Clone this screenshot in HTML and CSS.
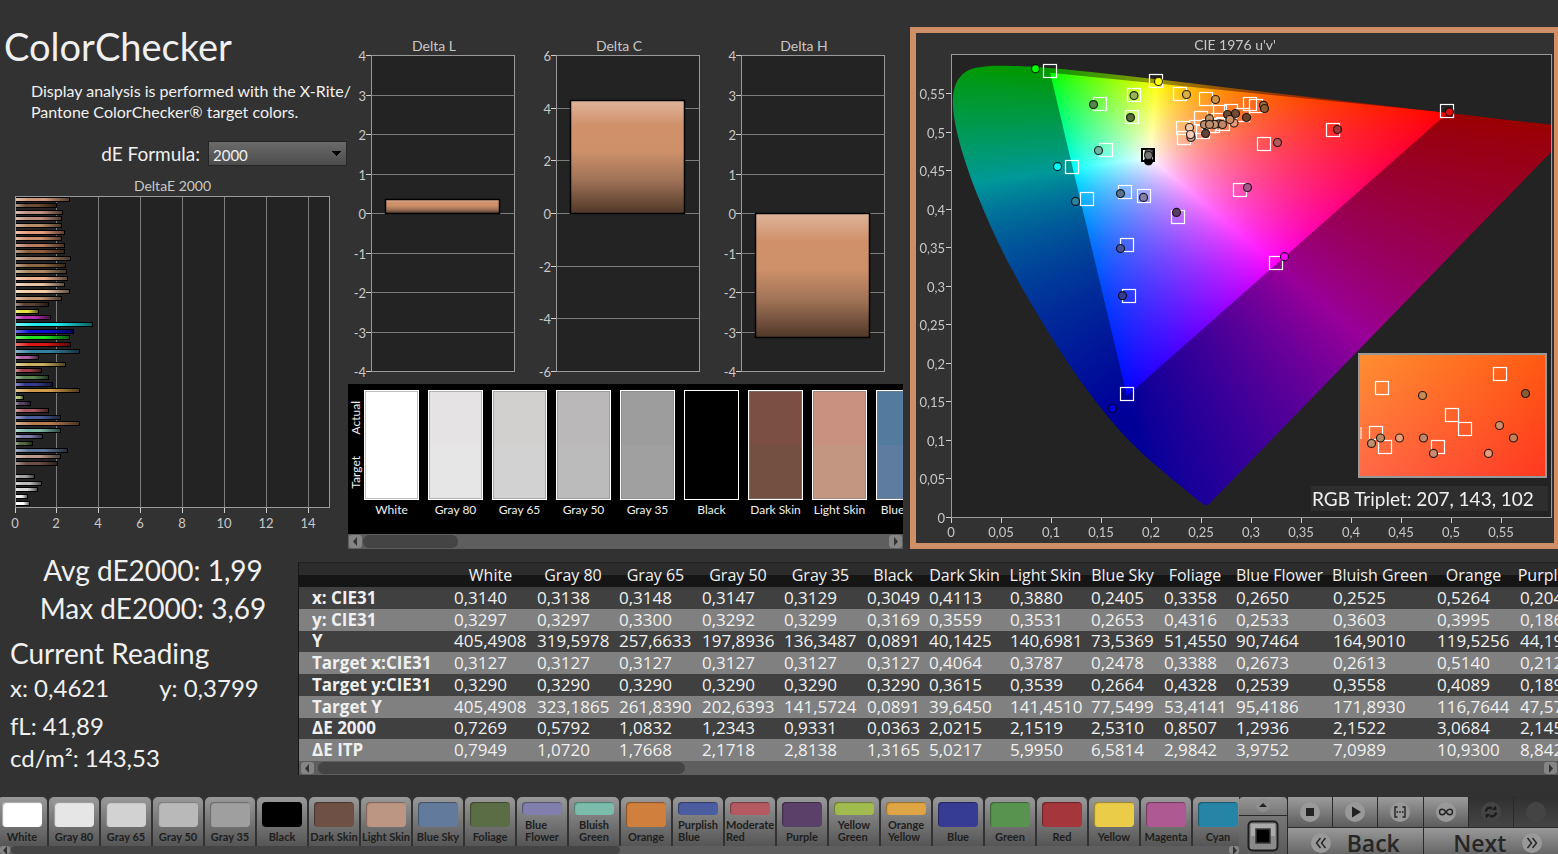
FILE: index.html
```html
<!DOCTYPE html>
<html lang="en">
<head>
<meta charset="utf-8">
<title>ColorChecker</title>
<link rel="stylesheet" href="styles.css">
</head>
<body>
<main class="app">
  <section class="top">
    <div class="intro">
      <h1 class="title">ColorChecker</h1>
      <p class="desc">Display analysis is performed with the X-Rite/<br>Pantone ColorChecker® target colors.</p>
      <div class="formula">
        <label for="formula">dE Formula:</label>
        <select id="formula" class="select"><option>2000</option></select>
      </div>
      <svg id="de-chart" class="chart" viewBox="0 176 348 360" role="img" aria-label="DeltaE 2000"></svg>
    </div>

    <div class="middle">
      <div class="deltas">
        <svg id="delta-l" class="chart" viewBox="0 0 185 348" role="img" aria-label="Delta L"></svg>
        <svg id="delta-c" class="chart" viewBox="0 0 185 348" role="img" aria-label="Delta C"></svg>
        <svg id="delta-h" class="chart" viewBox="0 0 185 348" role="img" aria-label="Delta H"></svg>
      </div>
      <div class="swatches">
        <div class="side"><span>Actual</span><span>Target</span></div>
        <div class="pairs">
          <figure class="pair"><div class="chip c-white"></div><figcaption>White</figcaption></figure>
          <figure class="pair"><div class="chip c-g80"></div><figcaption>Gray 80</figcaption></figure>
          <figure class="pair"><div class="chip c-g65"></div><figcaption>Gray 65</figcaption></figure>
          <figure class="pair"><div class="chip c-g50"></div><figcaption>Gray 50</figcaption></figure>
          <figure class="pair"><div class="chip c-g35"></div><figcaption>Gray 35</figcaption></figure>
          <figure class="pair"><div class="chip c-black"></div><figcaption>Black</figcaption></figure>
          <figure class="pair"><div class="chip c-dark"></div><figcaption>Dark Skin</figcaption></figure>
          <figure class="pair"><div class="chip c-light"></div><figcaption>Light Skin</figcaption></figure>
          <figure class="pair"><div class="chip c-sky"></div><figcaption>Blue Sky</figcaption></figure>
        </div>
      </div>
      <div class="scroll">
        <button class="arrow" aria-label="Scroll left"><svg viewBox="0 0 13 13"><path d="M8 2v9L4 6.500z"/></svg></button>
        <div class="track"><div class="thumb thumb-a"></div></div>
        <button class="arrow" aria-label="Scroll right"><svg viewBox="0 0 13 13"><path d="M5 2v9l4-4.500z"/></svg></button>
      </div>
    </div>

    <div class="gamut">
      <canvas id="gamut-fill" width="638" height="510"></canvas>
      <svg id="gamut-plot" class="chart" viewBox="916 33 638 510" role="img" aria-label="CIE 1976 u'v'"></svg>
    </div>
  </section>

  <section class="lower">
    <div class="readings">
      <p class="big center">Avg dE2000: 1,99</p>
      <p class="big center">Max dE2000: 3,69</p>
      <h2 class="big current">Current Reading</h2>
      <p class="val xy"><span>x: 0,4621</span><span>y: 0,3799</span></p>
      <p class="val">fL: 41,89</p>
      <p class="val last">cd/m²: 143,53</p>
    </div>
    <div class="data">
      <div class="clip">
      <table class="table">
        <colgroup><col class="w150"><col class="w83"><col class="w82"><col class="w83"><col class="w82"><col class="w83"><col class="w62"><col class="w81"><col class="w81"><col class="w73"><col class="w72"><col class="w97"><col class="w104"><col class="w83"><col class="w104"></colgroup>
        <thead><tr><th></th><th>White</th><th>Gray 80</th><th>Gray 65</th><th>Gray 50</th><th>Gray 35</th><th>Black</th><th>Dark Skin</th><th>Light Skin</th><th>Blue Sky</th><th>Foliage</th><th>Blue Flower</th><th>Bluish Green</th><th>Orange</th><th>Purplish Blue</th></tr></thead>
        <tbody>
        <tr><th>x: CIE31</th><td>0,3140</td><td>0,3138</td><td>0,3148</td><td>0,3147</td><td>0,3129</td><td>0,3049</td><td>0,4113</td><td>0,3880</td><td>0,2405</td><td>0,3358</td><td>0,2650</td><td>0,2525</td><td>0,5264</td><td>0,2040</td></tr>
        <tr><th>y: CIE31</th><td>0,3297</td><td>0,3297</td><td>0,3300</td><td>0,3292</td><td>0,3299</td><td>0,3169</td><td>0,3559</td><td>0,3531</td><td>0,2653</td><td>0,4316</td><td>0,2533</td><td>0,3603</td><td>0,3995</td><td>0,1860</td></tr>
        <tr><th>Y</th><td>405,4908</td><td>319,5978</td><td>257,6633</td><td>197,8936</td><td>136,3487</td><td>0,0891</td><td>40,1425</td><td>140,6981</td><td>73,5369</td><td>51,4550</td><td>90,7464</td><td>164,9010</td><td>119,5256</td><td>44,1900</td></tr>
        <tr><th>Target x:CIE31</th><td>0,3127</td><td>0,3127</td><td>0,3127</td><td>0,3127</td><td>0,3127</td><td>0,3127</td><td>0,4064</td><td>0,3787</td><td>0,2478</td><td>0,3388</td><td>0,2673</td><td>0,2613</td><td>0,5140</td><td>0,2120</td></tr>
        <tr><th>Target y:CIE31</th><td>0,3290</td><td>0,3290</td><td>0,3290</td><td>0,3290</td><td>0,3290</td><td>0,3290</td><td>0,3615</td><td>0,3539</td><td>0,2664</td><td>0,4328</td><td>0,2539</td><td>0,3558</td><td>0,4089</td><td>0,1890</td></tr>
        <tr><th>Target Y</th><td>405,4908</td><td>323,1865</td><td>261,8390</td><td>202,6393</td><td>141,5724</td><td>0,0891</td><td>39,6450</td><td>141,4510</td><td>77,5499</td><td>53,4141</td><td>95,4186</td><td>171,8930</td><td>116,7644</td><td>47,5700</td></tr>
        <tr><th>ΔE 2000</th><td>0,7269</td><td>0,5792</td><td>1,0832</td><td>1,2343</td><td>0,9331</td><td>0,0363</td><td>2,0215</td><td>2,1519</td><td>2,5310</td><td>0,8507</td><td>1,2936</td><td>2,1522</td><td>3,0684</td><td>2,1450</td></tr>
        <tr><th>ΔE ITP</th><td>0,7949</td><td>1,0720</td><td>1,7668</td><td>2,1718</td><td>2,8138</td><td>1,3165</td><td>5,0217</td><td>5,9950</td><td>6,5814</td><td>2,9842</td><td>3,9752</td><td>7,0989</td><td>10,9300</td><td>8,8420</td></tr>
        </tbody>
      </table>
      </div>
      <div class="scroll">
        <button class="arrow" aria-label="Scroll left"><svg viewBox="0 0 13 13"><path d="M8 2v9L4 6.500z"/></svg></button>
        <div class="track"><div class="thumb thumb-b"></div></div>
        <button class="arrow" aria-label="Scroll right"><svg viewBox="0 0 13 13"><path d="M5 2v9l4-4.500z"/></svg></button>
      </div>
    </div>
  </section>

  <footer class="bar">
    <div class="strip">
      <div class="patches">
        <button class="patch"><i class="k k-white"></i><span>White</span></button>
        <button class="patch"><i class="k k-g80"></i><span>Gray 80</span></button>
        <button class="patch"><i class="k k-g65"></i><span>Gray 65</span></button>
        <button class="patch"><i class="k k-g50"></i><span>Gray 50</span></button>
        <button class="patch"><i class="k k-g35"></i><span>Gray 35</span></button>
        <button class="patch"><i class="k k-black"></i><span>Black</span></button>
        <button class="patch"><i class="k k-dark"></i><span>Dark Skin</span></button>
        <button class="patch"><i class="k k-light"></i><span>Light Skin</span></button>
        <button class="patch"><i class="k k-sky"></i><span>Blue Sky</span></button>
        <button class="patch"><i class="k k-fol"></i><span>Foliage</span></button>
        <button class="patch"><i class="k k-flower"></i><span>Blue<br>Flower</span></button>
        <button class="patch"><i class="k k-bgreen"></i><span>Bluish<br>Green</span></button>
        <button class="patch"><i class="k k-orange"></i><span>Orange</span></button>
        <button class="patch"><i class="k k-pblue"></i><span>Purplish<br>Blue</span></button>
        <button class="patch"><i class="k k-mred"></i><span>Moderate<br>Red</span></button>
        <button class="patch"><i class="k k-purple"></i><span>Purple</span></button>
        <button class="patch"><i class="k k-ygreen"></i><span>Yellow<br>Green</span></button>
        <button class="patch"><i class="k k-oyellow"></i><span>Orange<br>Yellow</span></button>
        <button class="patch"><i class="k k-blue"></i><span>Blue</span></button>
        <button class="patch"><i class="k k-green"></i><span>Green</span></button>
        <button class="patch"><i class="k k-red"></i><span>Red</span></button>
        <button class="patch"><i class="k k-yellow"></i><span>Yellow</span></button>
        <button class="patch"><i class="k k-magenta"></i><span>Magenta</span></button>
        <button class="patch"><i class="k k-cyan"></i><span>Cyan</span></button>
      </div>
      <div class="scroll small">
        <button class="arrow" aria-label="Scroll left"><svg viewBox="0 0 13 13"><path d="M8 2v9L4 6.500z"/></svg></button>
        <div class="track"><div class="thumb thumb-c"></div></div>
        <button class="arrow" aria-label="Scroll right"><svg viewBox="0 0 13 13"><path d="M5 2v9l4-4.500z"/></svg></button>
      </div>
    </div>
    <div class="mode">
      <button class="up" aria-label="Expand"><svg viewBox="0 0 48 18"><circle cx="24" cy="8" r="7" fill="#8e8e8e"/><path d="M20 10h8l-4-4z" fill="#222"/></svg></button>
      <button class="window" aria-label="Pattern window"><svg viewBox="0 0 48 38"><rect x="9.500" y="5.500" width="29" height="29" rx="4" fill="#8a8a8a" stroke="#1c1c1c" stroke-width="2"/><rect x="12" y="8" width="24" height="12" fill="#aaa"/><rect x="17" y="13" width="14" height="14" fill="#000" stroke="#383838" stroke-width="1.500"/></svg></button>
    </div>
    <div class="controls">
      <div class="tools">
        <button class="tool" aria-label="Stop"><svg viewBox="0 0 20 20"><circle cx="10" cy="10" r="10"/><path class="ink" d="M6 6h8v8H6z"/></svg></button>
        <button class="tool" aria-label="Play"><svg viewBox="0 0 20 20"><circle cx="10" cy="10" r="10"/><path class="ink" d="M7 4.500v11l9-5.500z"/></svg></button>
        <button class="tool" aria-label="Range"><svg viewBox="0 0 20 20"><circle cx="10" cy="10" r="10"/><path class="line" d="M7.500 5H5v10h2.500M12.500 5H15v10h-2.500"/><path class="ink" d="M6.500 9.200h1.600v1.600H6.500zM9.200 9.200h1.600v1.600H9.200zM11.900 9.200h1.600v1.600h-1.600z"/></svg></button>
        <button class="tool" aria-label="Continuous"><svg viewBox="0 0 20 20"><circle cx="10" cy="10" r="10"/><path class="line" d="M10 10C8.500 7.800 7.500 7.300 6.200 7.300a2.700 2.700 0 0 0 0 5.400C7.500 12.700 8.500 12.200 10 10s2.500-2.700 3.800-2.700a2.700 2.700 0 0 1 0 5.400C12.500 12.700 11.500 12.200 10 10z"/></svg></button>
        <button class="tool off" aria-label="Refresh"><svg viewBox="0 0 20 20"><circle cx="10" cy="10" r="10"/><path class="line thick" d="M5 9.500C5 6.500 8 5 11 6.200M15 10.500c0 3-3 4.500-6 3.300"/><path class="ink" d="M10.500 7.800l5 .5L15 3.500zM9.500 12.200l-5-.5.500 4.800z"/></svg></button>
        <button class="tool off" aria-label="Record"><svg viewBox="0 0 20 20"><circle cx="10" cy="10" r="10"/></svg></button>
      </div>
      <div class="nav">
        <button class="go"><svg viewBox="0 0 20 20"><circle cx="10" cy="10" r="10"/><path class="line" d="M9.500 5l-4 5 4 5M14.500 5l-4 5 4 5"/></svg><span>Back</span></button>
        <button class="go next"><span>Next</span><svg viewBox="0 0 20 20"><circle cx="10" cy="10" r="10"/><path class="line" d="M5.500 5l4 5-4 5M10.500 5l4 5-4 5"/></svg></button>
      </div>
    </div>
  </footer>
</main>
<script src="charts.js"></script>
</body>
</html>
```

FILE: styles.css
```css
* { box-sizing: border-box; }
body {
  margin: 0;
  background: #323232;
  color: #f0f0f0;
  font-family: Lato, "Open Sans", sans-serif;
  overflow: hidden;
}
h1, h2, p, figure { margin: 0; font-weight: 400; }
button { font-family: inherit; border: 0; padding: 0; }
.app { min-height: 100vh; display: flex; flex-direction: column; }

/* Top row */
.top { display: grid; grid-template-columns: 348fr 562fr 648fr; }
.intro { padding-top: 20px; min-width: 0; }
.title { font-size: 38px; line-height: 52px; padding-left: 4px; }
.desc { font-size: 16px; line-height: 21px; padding: 8px 0 0 31px; white-space: nowrap; }
.formula { display: flex; justify-content: flex-end; align-items: center; gap: 8px; margin-top: 19px; padding-right: 1px; font-size: 19px; line-height: 24px; }
.select {
  appearance: none;
  width: 139px; height: 25px;
  padding: 3px 4px 0;
  color: #f0f0f0;
  font: 15px/20px Lato, sans-serif;
  border: 1px solid #262626;
  border-radius: 0;
  background-image: conic-gradient(from -42deg at 50% 100%, #000 84deg, transparent 0), linear-gradient(#6a6a6a, #4c4c4c);
  background-size: 9px 5px, auto;
  background-position: right 5px center, 0 0;
  background-repeat: no-repeat;
}
.chart { display: block; width: 100%; font-size: 13px; fill: #c8c8c8; }
.heading { font-size: 14px; }
.triplet { font-size: 19px; fill: #f0f0f0; }
.intro .chart { margin-top: 10px; }
.middle { padding: 36px 7px 0 0; min-width: 0; }
.deltas { display: grid; grid-template-columns: repeat(3, 1fr); }

.swatches { display: flex; height: 150px; background: #000; overflow: hidden; padding-top: 6px; }
.side { width: 16px; flex: none; height: 110px; display: flex; flex-direction: column; justify-content: space-around; align-items: center; font-size: 12px; line-height: 16px; }
.side span { writing-mode: vertical-rl; transform: rotate(180deg); }
.pairs { display: flex; gap: 9px; }
.pair { width: 55px; flex: none; text-align: center; font-size: 12px; line-height: 20px; white-space: nowrap; }
.chip { height: 110px; border: 1px solid #fff; box-shadow: inset 0 0 0 1px rgba(128,128,128,.5); }
.c-white { background: #fff; }
.c-g80 { background: linear-gradient(#e5e3e4 50%, #e6e6e6 50%); }
.c-g65 { background: linear-gradient(#d1d0ce 50%, #d2d2d2 50%); }
.c-g50 { background: linear-gradient(#bab8b9 50%, #bbb 50%); }
.c-g35 { background: linear-gradient(#9d9d9d 50%, #a0a0a0 50%); }
.c-black { background: #000; box-shadow: none; }
.c-dark { background: linear-gradient(#7b4f44 50%, #745041 50%); }
.c-light { background: linear-gradient(#c9917f 50%, #c29681 50%); }
.c-sky { background: linear-gradient(#527b9e 50%, #5d7c9f 50%); }

.scroll { display: flex; gap: 1px; height: 15px; padding: 1px; background: #5e5e5e; align-items: stretch; }
.arrow { width: 13px; border-radius: 3px; background: #858585; display: flex; align-items: center; justify-content: center; overflow: hidden; flex: none; }
.arrow svg { width: 13px; height: 13px; fill: #333; flex: none; }
.track { flex: 1; }
.thumb { height: 100%; border-radius: 6px; background: #444; }
.thumb-a { width: 18%; }
.thumb-b { width: 30%; }
.thumb-c { width: 50%; }

.gamut { display: grid; align-self: start; margin-top: 27px; border: 6px solid #cf8f66; border-right-width: 4px; }
.gamut > * { grid-area: 1 / 1; width: 100%; display: block; }

/* Readings and table */
.lower { display: grid; grid-template-columns: 298px minmax(0, 1fr); margin-top: 13px; }
.big { font-size: 28px; line-height: 38px; }
.readings { padding-left: 10px; margin-top: -11px; }
.center { text-align: center; padding-right: 2px; }
.current { margin-top: 7px; }
.val { font-size: 24px; line-height: 32px; }
.xy { display: flex; gap: 50px; }
.xy + .val { margin-top: 6px; }
.clip { overflow: hidden; }
.data { border-left: 1px solid #161616; border-top: 1px solid #222; font-family: "Open Sans", "Noto Sans", sans-serif; }
.table { table-layout: fixed; width: 1320px; height: 198px; border-collapse: collapse; white-space: nowrap; }
.table th, .table td { padding: 0 0 0 5px; text-align: left; font-size: 17px; line-height: 18px; }
.table thead th { padding: 0; text-align: center; font-weight: 400; font-size: 16px; height: 24px; }
.table tbody th { padding-left: 13px; font-weight: 700; }
.table thead { background: linear-gradient(#2c2c2c 50%, #151515 50%); }
.table tbody tr { background: #404040; }
.table tbody tr:nth-child(even) { background: #808080; }
.w150 { width: 150px; } .w83 { width: 83px; } .w82 { width: 82px; } .w62 { width: 62px; }
.w81 { width: 81px; } .w73 { width: 73px; } .w72 { width: 72px; } .w97 { width: 97px; } .w104 { width: 104px; }
.data .scroll { height: 14px; gap: 4px; padding-left: 2px; }

/* Bottom bar */
.bar { margin-top: auto; display: grid; grid-template-columns: minmax(0, 1fr) 49px 270px; height: 57px; }
.strip { overflow: hidden; display: flex; flex-direction: column; }
.patches { display: flex; gap: 2px; margin-left: -3px; height: 49px; }
.patch {
  width: 50px; flex: none;
  display: flex; flex-direction: column; align-items: center;
  padding: 5px 0 3px;
  border-radius: 5px 5px 0 0;
  background: linear-gradient(#999, #555);
  color: #1e1e1e;
  font-size: 11px; line-height: 12px; font-weight: 700;
  text-align: left; white-space: nowrap;
}
.k { flex: 1; width: 40px; border-radius: 4px; margin-bottom: 4px; box-shadow: inset 1px 1px 1px rgba(0,0,0,.35); }
.k-white { background: #fff; } .k-g80 { background: #e6e6e6; } .k-g65 { background: #d2d2d2; }
.k-g50 { background: #b9b9b9; } .k-g35 { background: #9f9f9f; } .k-black { background: #000; }
.k-dark { background: #6f5045; } .k-light { background: #bd9683; } .k-sky { background: #627a9c; }
.k-fol { background: #5a6d45; } .k-flower { background: #827fae; } .k-bgreen { background: #7bbcab; }
.k-orange { background: #d07f3c; } .k-pblue { background: #4c5ca0; } .k-mred { background: #b55a62; }
.k-purple { background: #5b4069; } .k-ygreen { background: #a2bb4e; } .k-oyellow { background: #dfa443; }
.k-blue { background: #363b93; } .k-green { background: #599350; } .k-red { background: #a5363b; }
.k-yellow { background: #ebcc49; } .k-magenta { background: #ae5991; } .k-cyan { background: #2685a6; }
.small { height: 8px; padding: 0; }
.small .arrow { width: 10px; }
.mode { display: flex; flex-direction: column; gap: 1px; padding: 0 1px 0 0; background: #2a2a2a; }
.mode svg { width: 48px; display: block; }
.up { height: 18px; border-radius: 4px 4px 0 0; background: linear-gradient(#969696, #777); }
.window { height: 38px; background: linear-gradient(#767676, #5a5a5a); }
.controls { display: flex; flex-direction: column; gap: 1px; background: #2a2a2a; }
.tools { display: grid; grid-template-columns: repeat(6, 1fr); gap: 1px; height: 30px; }
.tool { display: flex; align-items: center; justify-content: center; background: linear-gradient(#9c9c9c, #5c5c5c); }
.tool svg, .go svg { width: 20px; height: 20px; }
.tool circle, .go circle { fill: #999; }
.ink { fill: #222; }
.line { fill: none; stroke: #222; stroke-width: 1.4; }
.thick { stroke-width: 2.4; }
.off { background: linear-gradient(#303030, #454545); }
.off circle { fill: #444; }
.off .ink { fill: #1c1c1c; }
.off .line { stroke: #1c1c1c; }
.nav { display: grid; grid-template-columns: 1fr 1fr; gap: 1px; flex: 1; }
.go {
  display: flex; align-items: center; justify-content: center; gap: 16px;
  padding-top: 4px;
  background: linear-gradient(#999, #666);
  color: #262626;
  font: 600 23px/22px "Open Sans", sans-serif;
}
.next { padding-left: 14px; }
```

FILE: charts.js
```js
const NS = "http://www.w3.org/2000/svg";
function add(parent, tag, attrs, text) {
  const el = document.createElementNS(NS, tag);
  for (const k in attrs) el.setAttribute(k, attrs[k]);
  if (text !== undefined) el.textContent = text;
  parent.appendChild(el);
  return el;
}
function line(svg, x1, y1, x2, y2, stroke) {
  add(svg, "path", { d: `M${x1} ${y1}L${x2} ${y2}`, stroke, "stroke-width": 1, fill: "none" });
}
const GRID = "#7c7c7c", TICK = "#cfcfcf", PLOT = "#232323";

/* DeltaE bars */
(function () {
  const svg = document.getElementById("de-chart");
  add(svg, "text", { class: "heading", x: 172.5, y: 191, "text-anchor": "middle" }, "DeltaE 2000");
  add(svg, "rect", { x: 15.5, y: 196.5, width: 314, height: 311, fill: PLOT, stroke: "#9a9a9a" });
  for (let i = 0; i < 8; i++) {
    const x = Math.floor(15 + i * 41.9) + 0.5;
    if (i) line(svg, x, 197, x, 507, GRID);
    line(svg, x, 508, x, 513, TICK);
    add(svg, "text", { x: x - 0.5, y: 528, "text-anchor": "middle" }, i * 2);
  }
  const g = add(svg, "linearGradient", { id: "shade" });
  [[0, "#fff", .4], [.25, "#fff", 0], [.55, "#000", 0], [1, "#000", .6]].forEach(([o, c, a]) =>
    add(g, "stop", { offset: o, "stop-color": c, "stop-opacity": a }));
  const bars = [
    [69, "#cf9876"], [56, "#6b4c34"], [62, "#c09080"], [61, "#c09080"], [61, "#b98d68"], [64, "#e59c7c"],
    [61, "#cd8f70"], [64, "#b87d60"], [64, "#8d5d3d"], [70, "#b08a6c"], [65, "#8d6642"], [66, "#a98a64"],
    [67, "#eeb08f"], [64, "#e8c0a0"], [69, "#f2caa4"], [61, "#c49774"], [48, "#5a4236"], [38, "#e8e040"],
    [50, "#b030b0"], [92, "#20e8e8"], [73, "#0a10d0"], [69, "#20e020"], [70, "#d81818"], [79, "#3480a0"],
    [38, "#b060a0"], [65, "#c8b060"], [41, "#a04048"], [48, "#5a8450"], [52, "#383c90"], [79, "#d09a48"],
    [23, "#a8c060"], [30, "#5c4468"], [48, "#a85c60"], [60, "#4c5c98"], [79, "#b87c50"], [60, "#7cb8a8"],
    [42, "#7c7cac"], [32, "#586c44"], [67, "#607898"], [60, "#bc9888"], [57, "#6c5048"], [16, "#000"],
    [34, "#a0a0a0"], [41, "#bcbcbc"], [37, "#d8d8d8"], [27, "#eee"], [29, "#fff"]
  ];
  bars.forEach(([end, color], i) => {
    const y = Math.floor(197 + i * 6.61);
    if (end < 20) return;
    add(svg, "rect", { x: 16, y, width: end - 15, height: 5, fill: "#000" });
    add(svg, "rect", { x: 16, y: y + 1, width: end - 16, height: 3, fill: color });
    add(svg, "rect", { x: 16, y: y + 1, width: end - 16, height: 3, fill: "url(#shade)" });
  });
})();

/* Delta L / C / H */
function delta(id, title, max, step, value) {
  const svg = document.getElementById(id);
  const top = 19.5, bottom = 335.5, left = 23.5, right = 166.5;
  const py = v => Math.floor(top + (max - v) / (2 * max) * (bottom - top)) + 0.5;
  const g = add(svg, "linearGradient", { id: id + "-g", x1: 0, y1: 0, x2: 0, y2: 1 });
  [[0, "#dfb49b"], [.22, "#d0916a"], [.45, "#cd9069"], [.7, "#a07357"], [1, "#4f3728"]].forEach(([offset, color]) =>
    add(g, "stop", { offset, "stop-color": color }));
  add(svg, "text", { class: "heading", x: 86, y: 15, "text-anchor": "middle" }, title);
  add(svg, "rect", { x: left, y: top, width: right - left, height: bottom - top, fill: PLOT, stroke: "#9a9a9a" });
  for (let v = -max; v <= max; v += step) {
    const y = py(v);
    if (Math.abs(v) !== max) line(svg, left, y, right, y, GRID);
    line(svg, 18, y, 23, y, TICK);
    add(svg, "text", { x: 18, y: y + 5.5, "text-anchor": "end" }, v);
  }
  const a = py(Math.max(0, value)), b = py(Math.min(0, value));
  add(svg, "rect", { x: 37.5, y: a, width: 114, height: b - a, fill: `url(#${id}-g)`, stroke: "#000", "stroke-width": 1.5 });
}
delta("delta-l", "Delta L", 4, 1, 0.35);
delta("delta-c", "Delta C", 6, 2, 4.3);
delta("delta-h", "Delta H", 4, 1, -3.15);

/* CIE 1976 chromaticity fill, P3 primaries with a D65 white */
(function () {
  const canvas = document.getElementById("gamut-fill");
  const ctx = canvas.getContext("2d");
  const W = canvas.width, H = canvas.height;
  const X0 = 35.5, Y0 = 484.5, SX = 1000, SY = 770;
  const img = ctx.createImageData(W, H);
  for (let j = 0; j < H; j++) for (let i = 0; i < W; i++) {
    const u = (i - X0) / SX, v = Math.max((Y0 - j) / SY, 0.002);
    const X = 9 * u / (4 * v), Z = (12 - 3 * u - 20 * v) / (4 * v);
    const rgb = [
      2.4935 * X - 0.9314 - 0.4027 * Z,
      -0.8295 * X + 1.7627 + 0.0236 * Z,
      0.0358 * X - 0.0762 + 0.9569 * Z
    ].map(c => Math.max(0, c));
    const m = Math.max(...rgb) || 1, o = (j * W + i) * 4;
    for (let k = 0; k < 3; k++) img.data[o + k] = 255 * Math.pow(rgb[k] / m, 0.8);
    img.data[o + 3] = 255;
  }
  const px = (x, y) => {
    const d = -2 * x + 12 * y + 3;
    return [X0 + 4 * x / d * SX, Y0 - 9 * y / d * SY];
  };
  const P = [[.1741,.005],[.1714,.0051],[.1689,.0069],[.1644,.0109],[.1566,.0177],[.151,.0227],[.144,.0297],
    [.1355,.0399],[.1241,.0578],[.1096,.0868],[.0913,.1327],[.0687,.2007],[.0454,.295],[.0235,.4127],[.0082,.5384],
    [.0039,.6548],[.0139,.7502],[.0389,.812],[.0743,.8338],[.1142,.8262],[.1547,.8059],[.2296,.7543],[.3016,.6923],
    [.3731,.6245],[.4441,.5547],[.5125,.4866],[.5752,.4242],[.627,.3725],[.6658,.334],[.6915,.3083],[.719,.2809],[.7347,.2653]]
    .map(p => px(...p));
  // Catmull-Rom spline through the spectral locus
  const shape = new Path2D();
  shape.moveTo(...P[0]);
  for (let i = 0; i < P.length - 1; i++) {
    const a = P[Math.max(0, i - 1)], b = P[i], c = P[i + 1], d = P[Math.min(P.length - 1, i + 2)];
    shape.bezierCurveTo(b[0] + (c[0] - a[0]) / 6, b[1] + (c[1] - a[1]) / 6,
      c[0] - (d[0] - b[0]) / 6, c[1] - (d[1] - b[1]) / 6, c[0], c[1]);
  }
  shape.closePath();
  // Everything outside the display gamut is dimmed
  const dim = new Path2D();
  dim.rect(0, 0, W, H);
  [[.68, .32], [.265, .69], [.15, .06]].forEach((p, i) => i ? dim.lineTo(...px(...p)) : dim.moveTo(...px(...p)));
  dim.closePath();
  const layer = document.createElement("canvas");
  layer.width = W;
  layer.height = H;
  const t = layer.getContext("2d");
  t.putImageData(img, 0, 0);
  t.fillStyle = "rgba(0,0,0,.4)";
  t.fill(dim, "evenodd");
  t.globalCompositeOperation = "destination-in";
  t.fillStyle = "#000";
  t.fill(shape);
  ctx.fillStyle = PLOT;
  ctx.fillRect(35, 22, 600, 463);
  ctx.drawImage(layer, 35, 22, 600, 463, 35, 22, 600, 463);
  // Magnified view
  const tl = [255, 142, 48], tr = [255, 90, 18], bl = [255, 104, 72], br = [255, 56, 32];
  const inset = ctx.createImageData(188, 124);
  for (let j = 0; j < 124; j++) for (let i = 0; i < 188; i++) for (let k = 0; k < 4; k++) {
    const a = i / 187, b = j / 123;
    inset.data[(j * 188 + i) * 4 + k] = k === 3 ? 255 :
      (tl[k] * (1 - a) + tr[k] * a) * (1 - b) + (bl[k] * (1 - a) + br[k] * a) * b;
  }
  ctx.putImageData(inset, 443, 321);
})();

/* CIE axes and markers */
(function () {
  const svg = document.getElementById("gamut-plot");
  add(svg, "text", { class: "heading", x: 1235, y: 50, "text-anchor": "middle" }, "CIE 1976 u'v'");
  add(svg, "rect", { x: 951.5, y: 54.5, width: 600, height: 463, fill: "none", stroke: "#9a9a9a" });
  for (let i = 0; i < 12; i++) {
    const label = String(+(i * 0.05).toFixed(2)).replace(".", ",");
    const x = 951.5 + i * 50, y = Math.floor(517 - i * 38.5) + 0.5;
    line(svg, x, 518, x, 523, TICK);
    line(svg, 946, y, 951, y, TICK);
    add(svg, "text", { x: x - 0.5, y: 537, "text-anchor": "middle" }, label);
    add(svg, "text", { x: 945, y: y + 5, "text-anchor": "end" }, label);
  }
  add(svg, "rect", { x: 1311, y: 486, width: 237, height: 25, fill: "#2e2e2e" });
  add(svg, "text", { class: "triplet", x: 1312, y: 506 }, "RGB Triplet: 207, 143, 102");
  add(svg, "rect", { x: 1359, y: 354, width: 187, height: 123, fill: "none", stroke: "#999", "stroke-width": 2 });
  const square = (x, y) => add(svg, "rect", { x: x - 6.5, y: y - 6.5, width: 13, height: 13, fill: "none", stroke: "#fff", "stroke-width": 1.2 });
  const dot = (x, y, fill) => add(svg, "circle", { cx: x, cy: y, r: 4, fill, stroke: "#000", "stroke-opacity": .8, "stroke-width": 1.2 });
  [[1050,71],[1156,81],[1134,95],[1180,94],[1100,104],[1132,117],[1206,99],[1106,150],[1072,167],[1125,192],
   [1144,196],[1087,199],[1178,217],[1127,245],[1250,104],[1256,106],[1447,111],[1333,130],[1264,144],[1240,190],
   [1276,263],[1129,296],[1127,394],[1201,118],[1220,112],[1231,111],[1183,128],[1184,138],[1196,127],[1203,132],
   [1213,126],[1218,120],[1243,115],[1209,126],[1223,124],
   [1382,388],[1500,374],[1452,415],[1465,429],[1376,433],[1385,447],[1438,447]].forEach(p => square(...p));
  line(svg, 1361, 427, 1361, 439, "#fff");
  add(svg, "rect", { x: 1142, y: 149, width: 12, height: 12, fill: "none", stroke: "#000", "stroke-width": 2 });
  [[1148.5,161,"#000"],[1149,153,"#666"],[1148.5,155.5,"#777"],[1035.5,68.7,"#0f0"],[1158.5,81.5,"#ff0"],[1134,95.6,"#98b452"],
   [1186.5,94.5,"#d8b244"],[1215.5,99.5,"#cf9440"],[1093.5,104.6,"#558845"],[1130.5,117.6,"#556b3a"],[1098.5,150.5,"#70b4a2"],
   [1057.5,166.6,"#0ff"],[1120.5,193.6,"#587392"],[1143.5,197.4,"#8480a8"],[1075.5,201.4,"#2b83a0"],[1176.5,212.4,"#5c3d66"],
   [1120.5,248.5,"#46549a"],[1122.5,295.7,"#363c8c"],[1112.5,408.5,"#0000e0"],[1189.5,127.5,"#f4c8a4"],[1191,137.5,"#c49a84"],
   [1190.5,134.5,"#f8cdb8"],[1209.5,118.7,"#b98d68"],[1204.5,124.6,"#c09070"],[1219,123.8,"#a87858"],[1214.5,124.4,"#c8966e"],
   [1209.5,124.4,"#bd8e6c"],[1222.5,124.5,"#c38668"],[1205.6,133.4,"#60443a"],[1234,123,"#e59c7c"],[1227.5,114.5,"#6b4a30"],
   [1230,119.5,"#cf8f66"],[1235.5,113.5,"#704c34"],[1246.5,117.5,"#6b4428"],[1263.5,105.3,"#a86c3c"],[1264.5,108.5,"#8c5c34"],
   [1449.5,112,"#d81010"],[1337.5,129.5,"#a03438"],[1277.5,142.5,"#b45a5c"],[1247.5,187.5,"#a85890"],[1284.5,256.7,"#f0f"],
   [1422.5,395.5,"#c48c58"],[1525.5,393.5,"#8c5c34"],[1499.5,425.5,"#cf8f66"],[1513.5,438,"#c48058"],[1423.5,438,"#c08868"],
   [1399.5,438,"#e8a078"],[1380.5,438,"#b88860"],[1371.5,443.4,"#c09070"],[1433.5,453.4,"#c88c70"],[1488.5,453.4,"#e89c7c"]
  ].forEach(p => dot(...p));
})();
```
